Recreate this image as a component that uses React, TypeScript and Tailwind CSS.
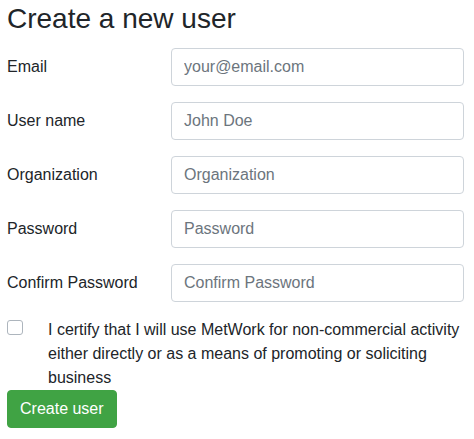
import { useState } from "react";

const fields = [
  { label: "Email", placeholder: "your@email.com", type: "email" },
  { label: "User name", placeholder: "John Doe", type: "text" },
  { label: "Organization", placeholder: "Organization", type: "text" },
  { label: "Password", placeholder: "Password", type: "password" },
  { label: "Confirm Password", placeholder: "Confirm Password", type: "password" },
];

export default function App() {
  const [certified, setCertified] = useState(false);

  return (
    <main
      className="w-full pl-[7px] pr-[10px] pt-[2px] text-[#212529] bg-white"
      style={{ fontFamily: '"Liberation Sans", Arial, sans-serif' }}
    >
      <h3 className="text-[28px] leading-[34px] font-normal mb-[12px]">Create a new user</h3>

      <form onSubmit={(e) => e.preventDefault()}>
        {fields.map((f) => (
          <div key={f.label} className="flex items-center mb-4">
            <label className="w-[164px] shrink-0 text-base leading-6">{f.label}</label>
            <input
              type={f.type}
              placeholder={f.placeholder}
              className="flex-1 h-[38px] px-3 text-base border border-[#ced4da] rounded-[4px] placeholder:text-[#6c757d] outline-none"
            />
          </div>
        ))}

        <div className="flex items-start">
          <div className="w-[41px] shrink-0 pt-[2px]">
            <input
              type="checkbox"
              checked={certified}
              onChange={(e) => setCertified(e.target.checked)}
              className="appearance-none w-[16px] h-[15px] border border-[#adb5bd] rounded-[3px] bg-white block"
            />
          </div>
          <p className="text-base leading-6">
            I certify that I will use MetWork for non-commercial activity either directly or as a means of promoting
            or soliciting business
          </p>
        </div>

        <button
          type="submit"
          className="h-[38px] px-3 text-base text-white bg-[#40a344] border border-[#40a344] rounded-[4px]"
        >
          Create user
        </button>
      </form>
    </main>
  );
}
